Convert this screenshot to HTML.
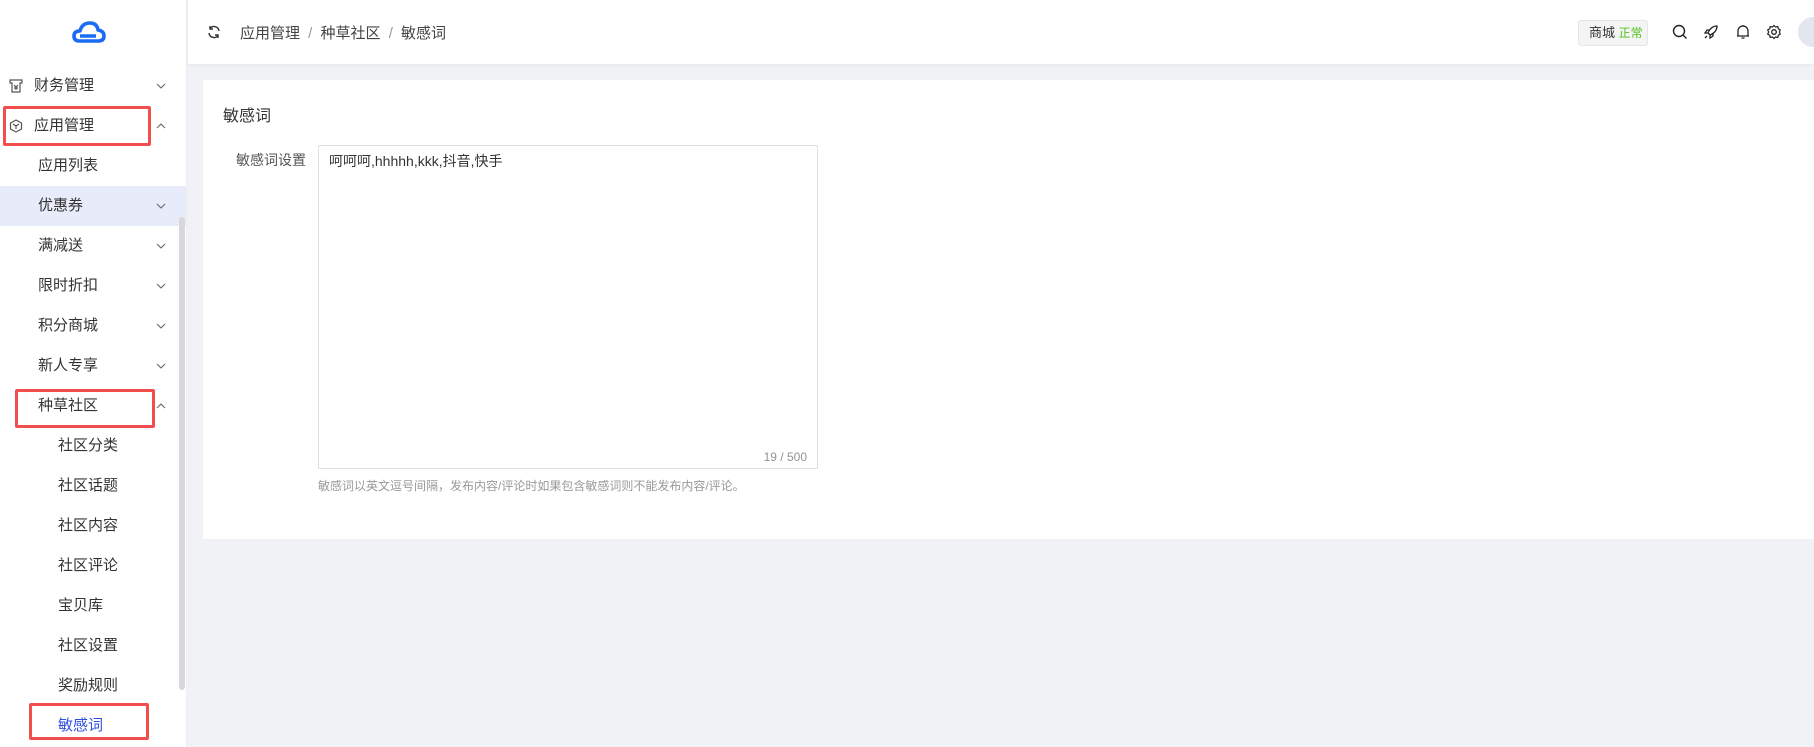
<!DOCTYPE html>
<html><head><meta charset="utf-8"><style>
*{margin:0;padding:0;box-sizing:border-box}
body{width:1814px;height:747px;overflow:hidden;background:#f0f2f5;font-family:"Liberation Sans","Noto Sans CJK SC",sans-serif;color:#333;position:relative}
.side{position:absolute;left:0;top:0;width:187px;height:747px;background:#fff;border-right:1px solid #eceef2}
.item{position:absolute;left:0;width:186px;height:40px;line-height:40px;font-size:15px;color:#333}
.item .chev{position:absolute;left:156px;top:16px;width:10px;height:8px}
.red{position:absolute;border:3px solid #f24e4e;border-radius:2px}
.head{position:absolute;left:188px;top:0;right:0;height:64px;background:#fff;box-shadow:0 1px 4px rgba(0,0,0,.05)}
.card{position:absolute;left:203px;top:80px;right:0;height:459px;background:#fff}
</style></head><body>
<svg width="0" height="0" style="position:absolute"><defs>
<symbol id="dn" viewBox="0 0 10 8"><path d="M1 2L5 6L9 2" fill="none" stroke="#666" stroke-width="1.1"/></symbol>
<symbol id="up" viewBox="0 0 10 8"><path d="M1 6L5 2L9 6" fill="none" stroke="#666" stroke-width="1.1"/></symbol>
</defs></svg>
<div class="side">
<svg style="position:absolute;left:72px;top:20px" width="34" height="24" viewBox="0 0 34 24"><path d="M7 21 Q2 21 2 16 Q2 11 8 11 Q10 3 18 3 Q25 3 26 10 Q32 11 32 16 Q32 21 26 21 Z M8 16 H24" fill="none" stroke="#1a6cf3" stroke-width="3.6" stroke-linejoin="round"/></svg>
<div class="item" style="top:66px"><svg style="position:absolute;left:9px;top:13px" width="14" height="14" viewBox="0 0 14 14"><path d="M1 1H13V4H11V13H3V4H1Z M5 6L7 8L9 6M7 8V11M5 9H9" fill="none" stroke="#555" stroke-width="1.2"/></svg><span style="position:absolute;left:34px">财务管理</span><svg class="chev"><use href="#dn"/></svg></div>
<div class="item" style="top:106px"><svg style="position:absolute;left:9px;top:13px" width="14" height="14" viewBox="0 0 14 14"><path d="M7 1L12.5 4V10L7 13L1.5 10V4Z M4 5L7 7L10 5M7 7V10" fill="none" stroke="#555" stroke-width="1.2"/></svg><span style="position:absolute;left:34px">应用管理</span><svg class="chev"><use href="#up"/></svg></div>
<div class="item" style="top:146px"><span style="position:absolute;left:38px">应用列表</span></div>
<div class="item" style="top:186px;background:#e8ebfa"><span style="position:absolute;left:38px">优惠券</span><svg class="chev"><use href="#dn"/></svg></div>
<div class="item" style="top:226px"><span style="position:absolute;left:38px">满减送</span><svg class="chev"><use href="#dn"/></svg></div>
<div class="item" style="top:266px"><span style="position:absolute;left:38px">限时折扣</span><svg class="chev"><use href="#dn"/></svg></div>
<div class="item" style="top:306px"><span style="position:absolute;left:38px">积分商城</span><svg class="chev"><use href="#dn"/></svg></div>
<div class="item" style="top:346px"><span style="position:absolute;left:38px">新人专享</span><svg class="chev"><use href="#dn"/></svg></div>
<div class="item" style="top:386px"><span style="position:absolute;left:38px">种草社区</span><svg class="chev"><use href="#up"/></svg></div>
<div class="item" style="top:426px"><span style="position:absolute;left:58px">社区分类</span></div>
<div class="item" style="top:466px"><span style="position:absolute;left:58px">社区话题</span></div>
<div class="item" style="top:506px"><span style="position:absolute;left:58px">社区内容</span></div>
<div class="item" style="top:546px"><span style="position:absolute;left:58px">社区评论</span></div>
<div class="item" style="top:586px"><span style="position:absolute;left:58px">宝贝库</span></div>
<div class="item" style="top:626px"><span style="position:absolute;left:58px">社区设置</span></div>
<div class="item" style="top:666px"><span style="position:absolute;left:58px">奖励规则</span></div>
<div class="item" style="top:706px;color:#2d4fe0"><span style="position:absolute;left:58px">敏感词</span></div>
<div style="position:absolute;left:179px;top:217px;width:6px;height:473px;background:#d8d8db;border-radius:3px"></div>
<div class="red" style="left:3px;top:106px;width:148px;height:40px"></div>
<div class="red" style="left:15px;top:389px;width:140px;height:39px"></div>
<div class="red" style="left:29px;top:703px;width:120px;height:37px"></div>
</div>
<div class="head">
<svg style="position:absolute;left:19px;top:25px" width="14" height="14" viewBox="0 0 14 14"><path d="M12 6A5 5 0 0 0 3 3.5M2 8A5 5 0 0 0 11 10.5M3 1V4H6M11 13V10H8" fill="none" stroke="#333" stroke-width="1.4"/></svg>
<div style="position:absolute;left:52px;top:22px;font-size:15px;color:#444;word-spacing:4px">应用管理 <span style="color:#999">/</span> 种草社区 <span style="color:#999">/</span> 敏感词</div>
<div style="position:absolute;left:1390px;top:20px;width:70px;height:26px;background:#f4f4f5;border:1px solid #e6e6e6;border-radius:3px;font-size:13px;line-height:24px;padding-left:10px">商城 <span style="color:#52c41a;font-size:12px">正常</span></div>
<svg style="position:absolute;left:1484px;top:24px" width="16" height="16" viewBox="0 0 16 16"><circle cx="7" cy="7" r="5.5" fill="none" stroke="#222" stroke-width="1.4"/><path d="M11 11L14.5 14.5" stroke="#222" stroke-width="1.4"/></svg>
<svg style="position:absolute;left:1515px;top:24px" width="16" height="16" viewBox="0 0 16 16"><path d="M14 2C9 2 6 6 5 9L7 11C10 10 14 7 14 2ZM5 9L2 9 4 6 7 6M7 11 7 14 10 12 10 9M4 12 2 14" fill="none" stroke="#222" stroke-width="1.3"/></svg>
<svg style="position:absolute;left:1547px;top:24px" width="16" height="16" viewBox="0 0 16 16"><path d="M3 12V7A5 5 0 0 1 13 7V12H2H14M6.5 14H9.5M8 1V2" fill="none" stroke="#222" stroke-width="1.3"/></svg>
<svg style="position:absolute;left:1578px;top:24px" width="16" height="16" viewBox="0 0 16 16"><circle cx="8" cy="8" r="2.3" fill="none" stroke="#222" stroke-width="1.3"/><path d="M8 1.5L9.5 3 11.8 2.6 12.3 4.8 14.3 6 13.3 8 14.3 10 12.3 11.2 11.8 13.4 9.5 13 8 14.5 6.5 13 4.2 13.4 3.7 11.2 1.7 10 2.7 8 1.7 6 3.7 4.8 4.2 2.6 6.5 3Z" fill="none" stroke="#222" stroke-width="1.2"/></svg>
<div style="position:absolute;left:1610px;top:17px;width:30px;height:30px;border-radius:50%;background:#e4e6ef"></div>
</div>
<div class="card">
<div style="position:absolute;left:20px;top:22px;font-size:16px;color:#333">敏感词</div>
<div style="position:absolute;left:32px;top:70px;width:71px;text-align:right;font-size:14px;color:#555">敏感词设置</div>
<div style="position:absolute;left:115px;top:65px;width:500px;height:324px;border:1px solid #dcdfe6;border-radius:2px">
<div style="position:absolute;left:10px;top:5px;font-size:14px;color:#333">呵呵呵,hhhhh,kkk,抖音,快手</div>
<div style="position:absolute;right:10px;bottom:4px;font-size:12px;color:#909399">19 / 500</div>
</div>
<div style="position:absolute;left:115px;top:397px;font-size:12px;color:#999">敏感词以英文逗号间隔，发布内容/评论时如果包含敏感词则不能发布内容/评论。</div>
</div>
</body></html>
